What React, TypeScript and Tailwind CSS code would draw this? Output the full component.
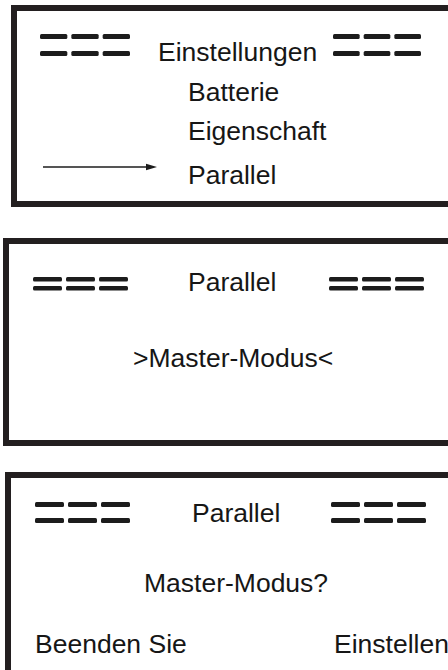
import React from "react";

function Dashes({ w, second, t = 5 }: { w: number; second: number; t?: number }) {
  const seg = (w - 8) / 3;
  const h = second + t;
  const xs = [0, seg + 4, 2 * (seg + 4)];
  return (
    <svg width={w} height={h} viewBox={`0 0 ${w} ${h}`} className="block shrink-0">
      {xs.map((x, i) => (
        <g key={i} fill="#1c1c1c">
          <rect x={x} y={0} width={seg} height={t} rx={1.5} />
          <rect x={x} y={second} width={seg} height={t} rx={1.5} />
        </g>
      ))}
    </svg>
  );
}

function Arrow() {
  return (
    <svg width={114} height={8} viewBox="0 0 114 8" className="block shrink-0">
      <line x1={0} y1={4} x2={106} y2={4} stroke="#1c1c1c" strokeWidth={1.6} />
      <polygon points="103,0.8 114,4 103,7.2" fill="#1c1c1c" />
    </svg>
  );
}

export default function App() {
  return (
    <div className="w-[448px] h-[670px] overflow-hidden bg-white text-[#161616] font-['Liberation_Sans',Arial,sans-serif] text-[26.5px] leading-[30px] pt-[5px]">
      {/* Panel 1 */}
      <div className="ml-[11px] w-[460px] h-[202px] border-[6px] border-[#231f20] flex flex-col">
        <div className="flex items-start pt-[23px]">
          <div className="ml-[23px] w-[90px]">
            <Dashes w={90} second={17} />
          </div>
          <div className="ml-[28px] w-[175px] mt-[3px] whitespace-nowrap">Einstellungen</div>
          <Dashes w={88} second={17} />
        </div>
        <div className="pl-[171px] mt-[10px] whitespace-nowrap">Batterie</div>
        <div className="pl-[171px] mt-[9px] whitespace-nowrap">Eigenschaft</div>
        <div className="flex items-start mt-[14px] pl-[26px]">
          <div className="mt-[3px]">
            <Arrow />
          </div>
          <div className="ml-[31px] whitespace-nowrap">Parallel</div>
        </div>
      </div>

      {/* Panel 2 */}
      <div className="mt-[31px] ml-[3px] w-[470px] h-[208px] border-[6px] border-[#231f20] flex flex-col">
        <div className="flex items-start pt-[23px]">
          <div className="ml-[24px] w-[95px] mt-[10px]">
            <Dashes w={95} second={9} t={4.5} />
          </div>
          <div className="ml-[60px] w-[141px] whitespace-nowrap">Parallel</div>
          <div className="mt-[10px]">
            <Dashes w={95} second={9} t={4.5} />
          </div>
        </div>
        <div className="pl-[124px] mt-[46px] whitespace-nowrap">&gt;Master-Modus&lt;</div>
      </div>

      {/* Panel 3 */}
      <div className="mt-[26px] ml-[5px] w-[470px] h-[230px] border-[6px] border-b-0 border-[#231f20] flex flex-col">
        <div className="flex items-start pt-[18px]">
          <div className="ml-[24px] w-[95px] mt-[6px]">
            <Dashes w={95} second={16} />
          </div>
          <div className="ml-[62px] w-[139px] mt-[2px] whitespace-nowrap">Parallel</div>
          <div className="mt-[6px]">
            <Dashes w={95} second={16} />
          </div>
        </div>
        <div className="pl-[133px] mt-[40px] whitespace-nowrap">Master-Modus?</div>
        <div className="flex mt-[31px] pl-[24px]">
          <div className="w-[299px] whitespace-nowrap">Beenden Sie</div>
          <div className="whitespace-nowrap">Einstellen</div>
        </div>
      </div>
    </div>
  );
}
